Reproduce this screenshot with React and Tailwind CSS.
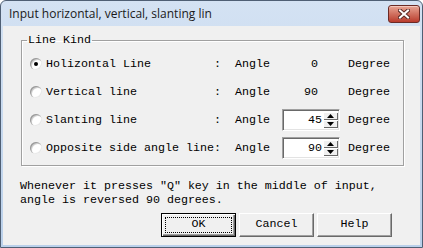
const MONO = { fontFamily: '"Liberation Mono", "Courier New", monospace' };

const ROWS = [
  { key: 'h', label: 'Holizontal Line', value: '0', checked: true },
  { key: 'v', label: 'Vertical line', value: '90' },
  { key: 's', label: 'Slanting line', value: '45', spin: true },
  { key: 'o', label: 'Opposite side angle line:', value: '90', spin: true, noColon: true },
];

function Radio({ checked }) {
  return (
    <span className="flex h-[12px] w-[12px] shrink-0 items-center justify-center rounded-full bg-white shadow-[inset_1px_1px_0_#9a9a9a,inset_2px_2px_0_#d0d0d0,inset_-1px_-1px_0_#e8e8e8]">
      {checked && <span className="h-[4px] w-[4px] rounded-full bg-black" />}
    </span>
  );
}

function SpinArrow({ up }) {
  return (
    <span className="flex h-[8px] w-[15px] items-center justify-center bg-[#f0f0f0] shadow-[inset_1px_1px_0_#fff,inset_-1px_-1px_0_#696969]">
      <svg width="7" height="4" viewBox="0 0 7 4">
        <path d={up ? 'M3.5 0 L7 4 L0 4Z' : 'M0 0 L7 0 L3.5 4Z'} fill="#000" />
      </svg>
    </span>
  );
}

function SpinBox({ value }) {
  return (
    <div className="flex h-[22px] w-[58px] items-center border border-b-white border-l-[#a0a0a0] border-r-white border-t-[#a0a0a0] bg-white shadow-[inset_1px_1px_0_#696969,inset_-1px_-1px_0_#e3e3e3]">
      <span className="flex-1 pr-[1px] text-right">{value}</span>
      <div className="mr-[1px] flex flex-col">
        <SpinArrow up />
        <SpinArrow />
      </div>
    </div>
  );
}

function DlgButton({ label, isDefault }) {
  if (isDefault) {
    return (
      <button
        type="button"
        className="flex h-[24px] w-[75px] border border-black bg-[#f0f0f0] p-[3px] shadow-[inset_1px_1px_0_#fff,inset_-1px_-1px_0_#696969,inset_-2px_-2px_0_#a0a0a0]"
      >
        <span className="flex flex-1 items-center justify-center border border-dotted border-black">{label}</span>
      </button>
    );
  }
  return (
    <button
      type="button"
      className="flex h-[24px] w-[75px] items-center justify-center border border-b-[#696969] border-l-white border-r-[#696969] border-t-white bg-[#f0f0f0] shadow-[inset_-1px_-1px_0_#a0a0a0]"
    >
      {label}
    </button>
  );
}

export default function App() {
  return (
    <div className="h-[248px] w-[423px] bg-white">
      <div className="flex h-full flex-col rounded-t-[6px] border border-[#4f5f74] bg-gradient-to-b from-[#d4e2f3] to-[#bad0ea] px-[2px] pb-[2px]">
        {/* title bar */}
        <div className="flex h-[25px] shrink-0 items-center justify-between pl-[6px]">
          <span className="text-[12px] text-[#1a1a1a]" style={{ fontFamily: '"Open Sans", "Liberation Sans", sans-serif' }}>
            Input horizontal, vertical, slanting lin
          </span>
          <span className="flex h-[18px] w-[32px] items-center justify-center rounded-[3px] border border-[#6b2a25] bg-gradient-to-b from-[#e8a595] via-[#d0705f] to-[#b93a2c] shadow-[inset_0_1px_0_#f4c8bd]">
            <svg width="12" height="10" viewBox="0 0 12 10">
              <path d="M2 1.5 L10 8.5 M10 1.5 L2 8.5" stroke="#5a2a26" strokeWidth="4" strokeLinecap="square" />
              <path d="M2 1.5 L10 8.5 M10 1.5 L2 8.5" stroke="#fff" strokeWidth="2" strokeLinecap="square" />
            </svg>
          </span>
        </div>

        {/* client area */}
        <div className="flex flex-1 flex-col bg-[#f0f0f0] pl-[17px] pr-[16px] pt-[8px] text-[11.67px] text-black" style={MONO}>
          <fieldset className="ml-[1px] border border-[#a0a0a0] pb-[6px] shadow-[1px_1px_0_#fff,inset_1px_1px_0_#fff]">
            <legend className="ml-[5px] px-[1px] leading-[13px]">Line Kind</legend>
            <div className="flex flex-col gap-[6px] pt-[6px]">
              {ROWS.map((row) => (
                <div key={row.key} className="flex h-[22px] items-center pl-[8px] leading-[14px]">
                  <Radio checked={row.checked} />
                  <span className={`ml-[4px] whitespace-pre ${row.noColon ? 'w-[189px]' : 'w-[168px]'}`}>{row.label}</span>
                  {!row.noColon && <span className="w-[21px]">:</span>}
                  <span className="w-[47px]">Angle</span>
                  {row.spin ? (
                    <SpinBox value={row.value} />
                  ) : (
                    <span className="w-[58px] pr-[22px] text-right">{row.value}</span>
                  )}
                  <span className="ml-[8px]">Degree</span>
                </div>
              ))}
            </div>
          </fieldset>

          <p className="mt-[13px] leading-[14px]">
            Whenever it presses "Q" key in the middle of input,
            <br />
            angle is reversed 90 degrees.
          </p>

          <div className="mr-[12px] mt-[6px] flex justify-end gap-[3px]">
            <DlgButton label="OK" isDefault />
            <DlgButton label="Cancel" />
            <DlgButton label="Help" />
          </div>
        </div>
      </div>
    </div>
  );
}
